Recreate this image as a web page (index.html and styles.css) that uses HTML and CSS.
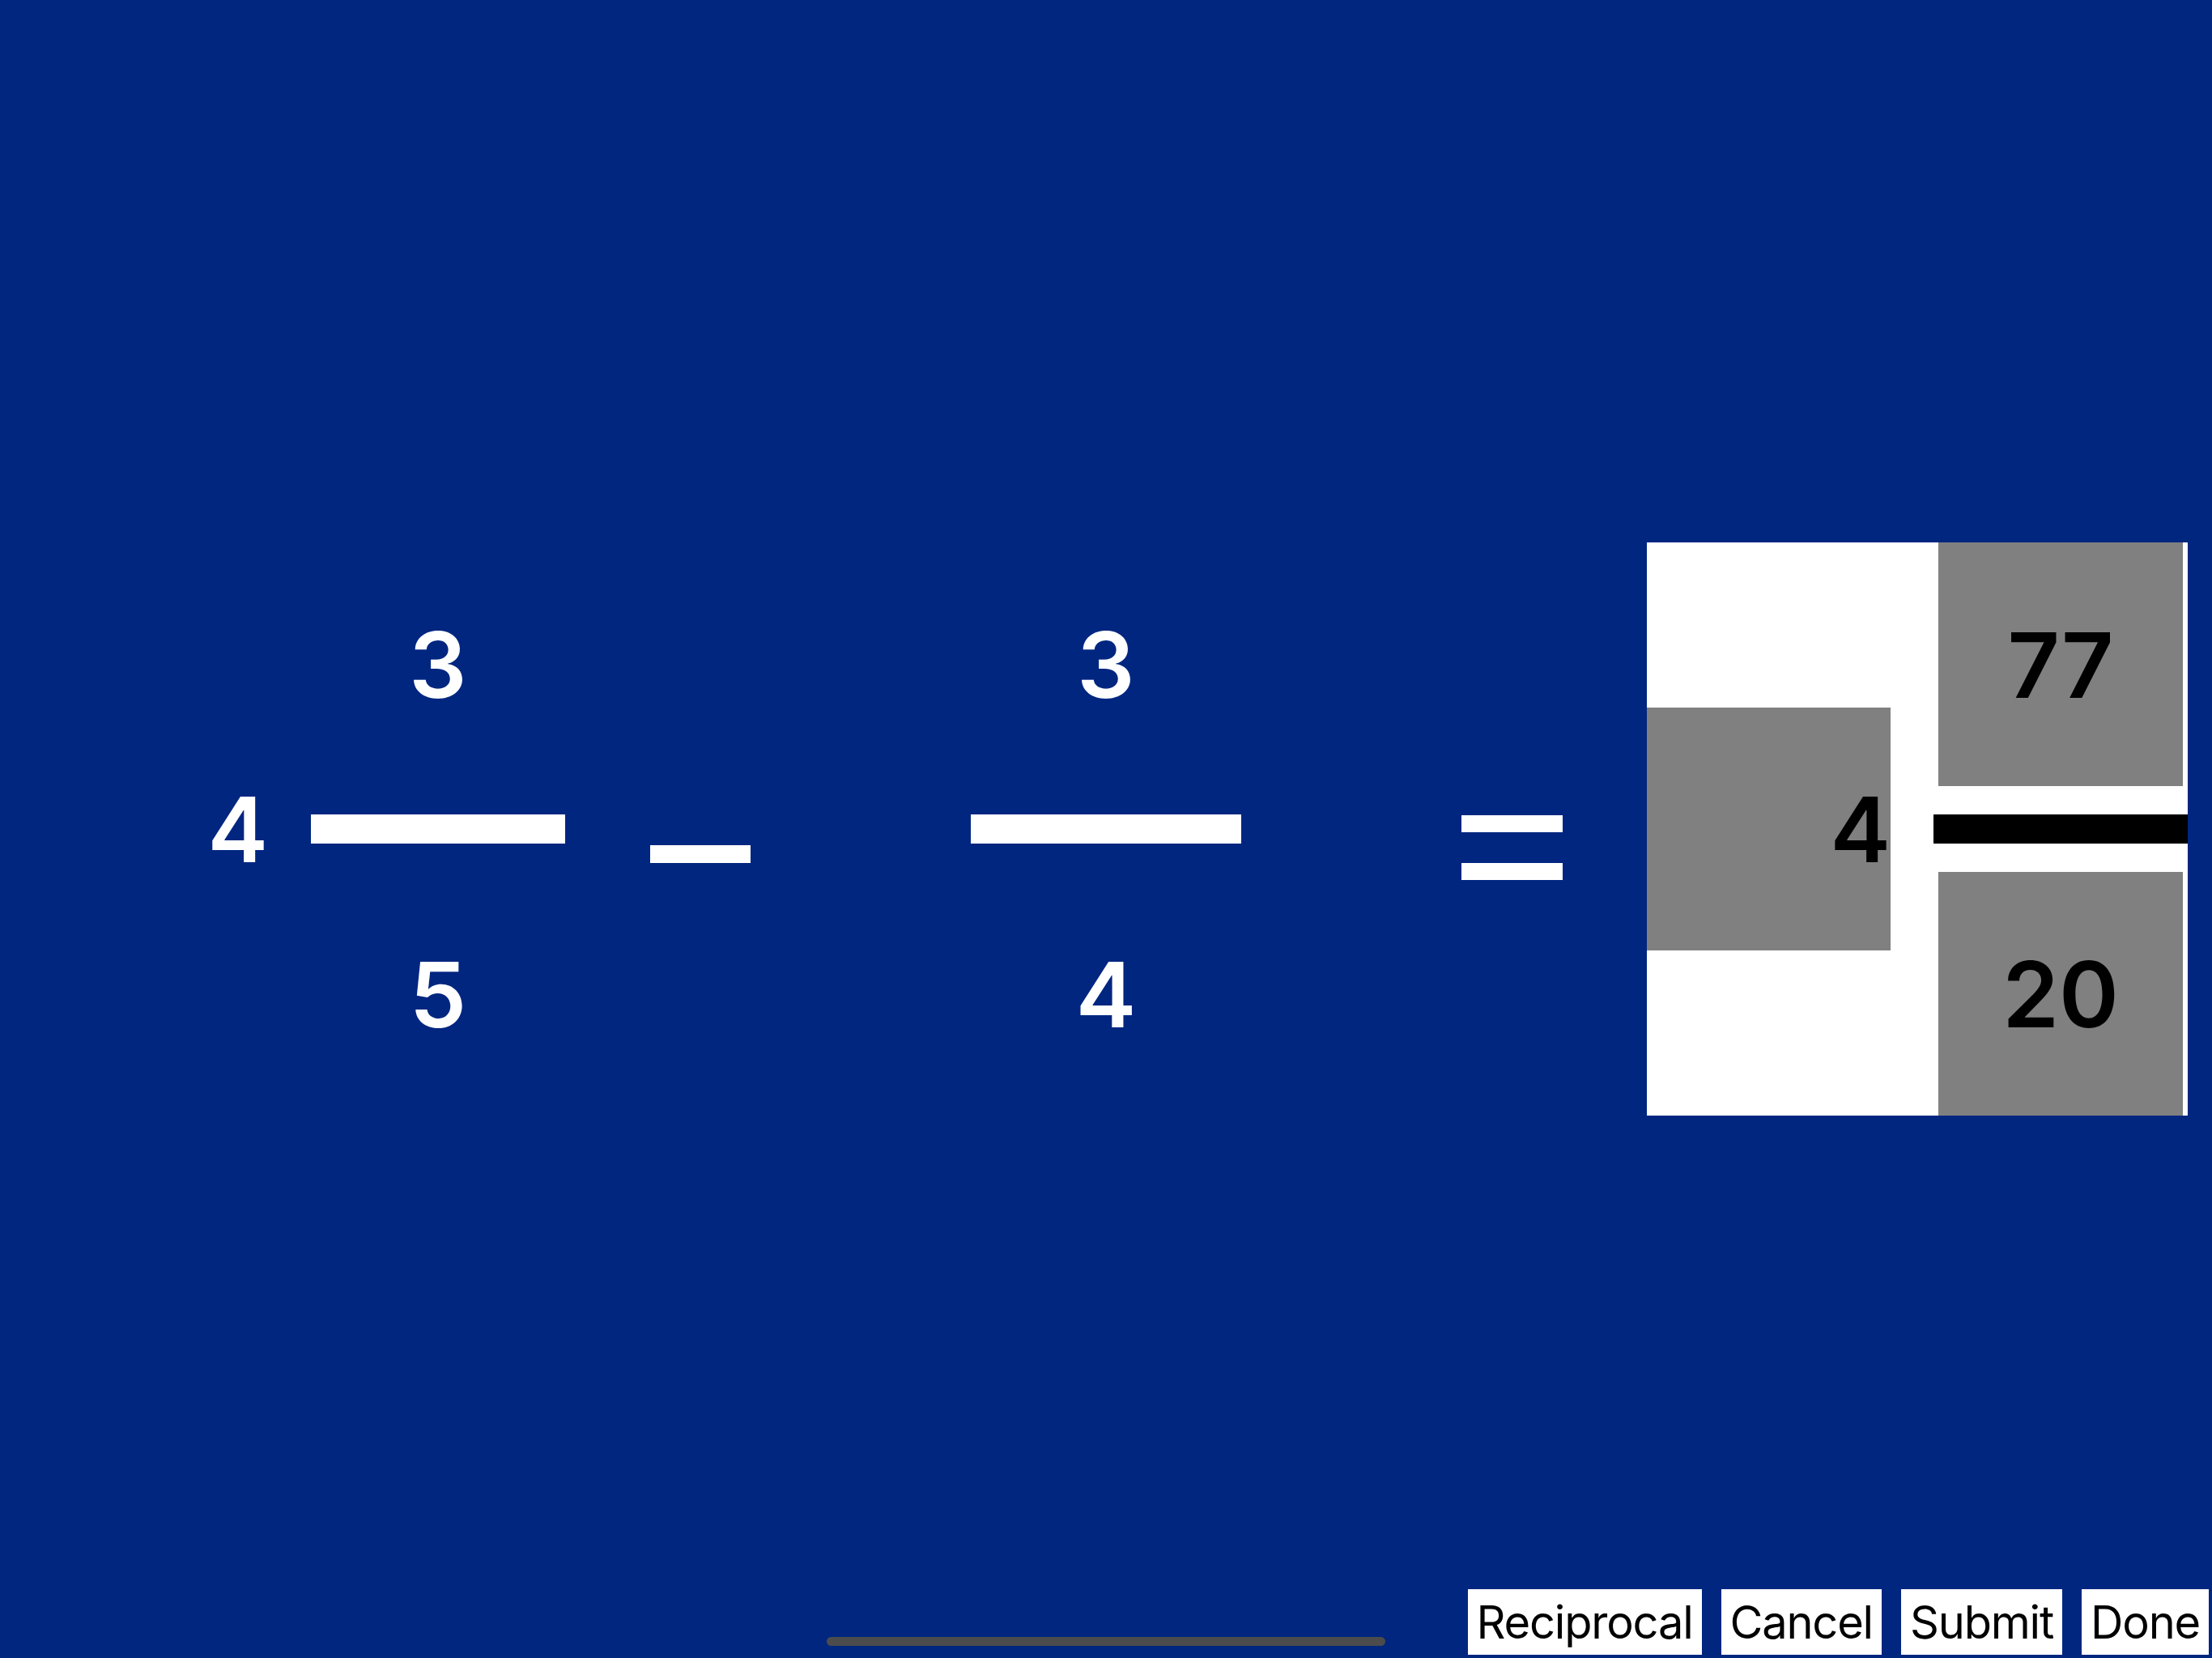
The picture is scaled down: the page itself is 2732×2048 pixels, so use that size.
FILE: index.html
```html
<!DOCTYPE html>
<html lang="en">

<head>
    <meta charset="UTF-8">
    <meta name="viewport" content="width=device-width, initial-scale=1.0">
    <title>Fractions</title>
    <link rel="stylesheet" href="styles.css">
</head>

<body>

    <div class="screen">

        <div class="equation">
            <!-- first mixed number: 4 3/5 -->
            <div class="whole">4</div>
            <div class="fraction frac-one">
                <div class="cell">3</div>
                <div class="bar"></div>
                <div class="cell">5</div>
            </div>

            <div class="minus"></div>

            <div class="fraction frac-two">
                <div class="cell">3</div>
                <div class="bar"></div>
                <div class="cell">4</div>
            </div>

            <div class="equals">
                <div class="equals-line"></div>
                <div class="equals-line"></div>
            </div>

            <!-- answer the user is typing -->
            <div class="answer">
                <div class="whole answer-input">4</div>
                <div class="fraction">
                    <div class="cell answer-input">77</div>
                    <div class="bar bar-dark"></div>
                    <div class="cell answer-input">20</div>
                </div>
            </div>
        </div>

        <div class="toolbar">
            <button type="button" class="tool-button">Reciprocal</button>
            <button type="button" class="tool-button">Cancel</button>
            <button type="button" class="tool-button">Submit</button>
            <button type="button" class="tool-button">Done</button>
        </div>

        <div class="home-indicator"></div>

    </div>

</body>

</html>
```

FILE: styles.css
```css
html,
body {
    margin: 0;
    padding: 0;
    height: 100%;
}

body {
    background-color: #002680;
    font-family: Inter, "Noto Sans", sans-serif;
    overflow: hidden;
}

.screen {
    display: grid;
    height: 100vh;
}

.equation,
.toolbar,
.home-indicator {
    grid-area: 1 / 1;
}

.equation {
    display: flex;
    align-items: center;
    align-self: center;
    padding-left: 30px;
    color: #ffffff;
    font-size: 112px;
    font-weight: 600;
}

.whole {
    width: 301px;
    height: 300px;
    display: flex;
    align-items: center;
    justify-content: flex-end;
    margin-right: 53px;
}

.fraction {
    display: flex;
    flex-direction: column;
    gap: 35px;
}

.frac-one {
    width: 314px;
}

.frac-two {
    width: 334px;
}

.cell {
    height: 301px;
    margin: 0 6px;
    display: flex;
    align-items: center;
    justify-content: center;
}

.bar {
    height: 36px;
    background-color: #ffffff;
}

.bar-dark {
    background-color: #000000;
}

.minus {
    width: 124px;
    height: 22px;
    margin: 61px 272px 0 105px;
    background-color: #ffffff;
}

.equals {
    width: 125px;
    margin: 45px 104px 0 272px;
    display: flex;
    flex-direction: column;
    gap: 38px;
}

.equals-line {
    height: 21px;
    background-color: #ffffff;
}

.answer {
    display: flex;
    align-items: center;
    background-color: #ffffff;
    color: #000000;
}

.answer .fraction {
    width: 314px;
}

.answer-input {
    background-color: #808080;
}

.toolbar {
    align-self: end;
    justify-self: end;
    display: flex;
    gap: 24px;
    margin: 0 4px 4px 0;
}

.tool-button {
    height: 81px;
    min-width: 154px;
    padding: 0 11px;
    border: none;
    border-radius: 0;
    background-color: #ffffff;
    color: #000000;
    font-family: Inter, "Noto Sans", sans-serif;
    font-size: 56px;
    letter-spacing: -1.2px;
    cursor: pointer;
}

.home-indicator {
    align-self: end;
    justify-self: center;
    width: 690px;
    height: 11px;
    margin-bottom: 15px;
    border-radius: 6px;
    background-color: #4c4c4c;
}
```
